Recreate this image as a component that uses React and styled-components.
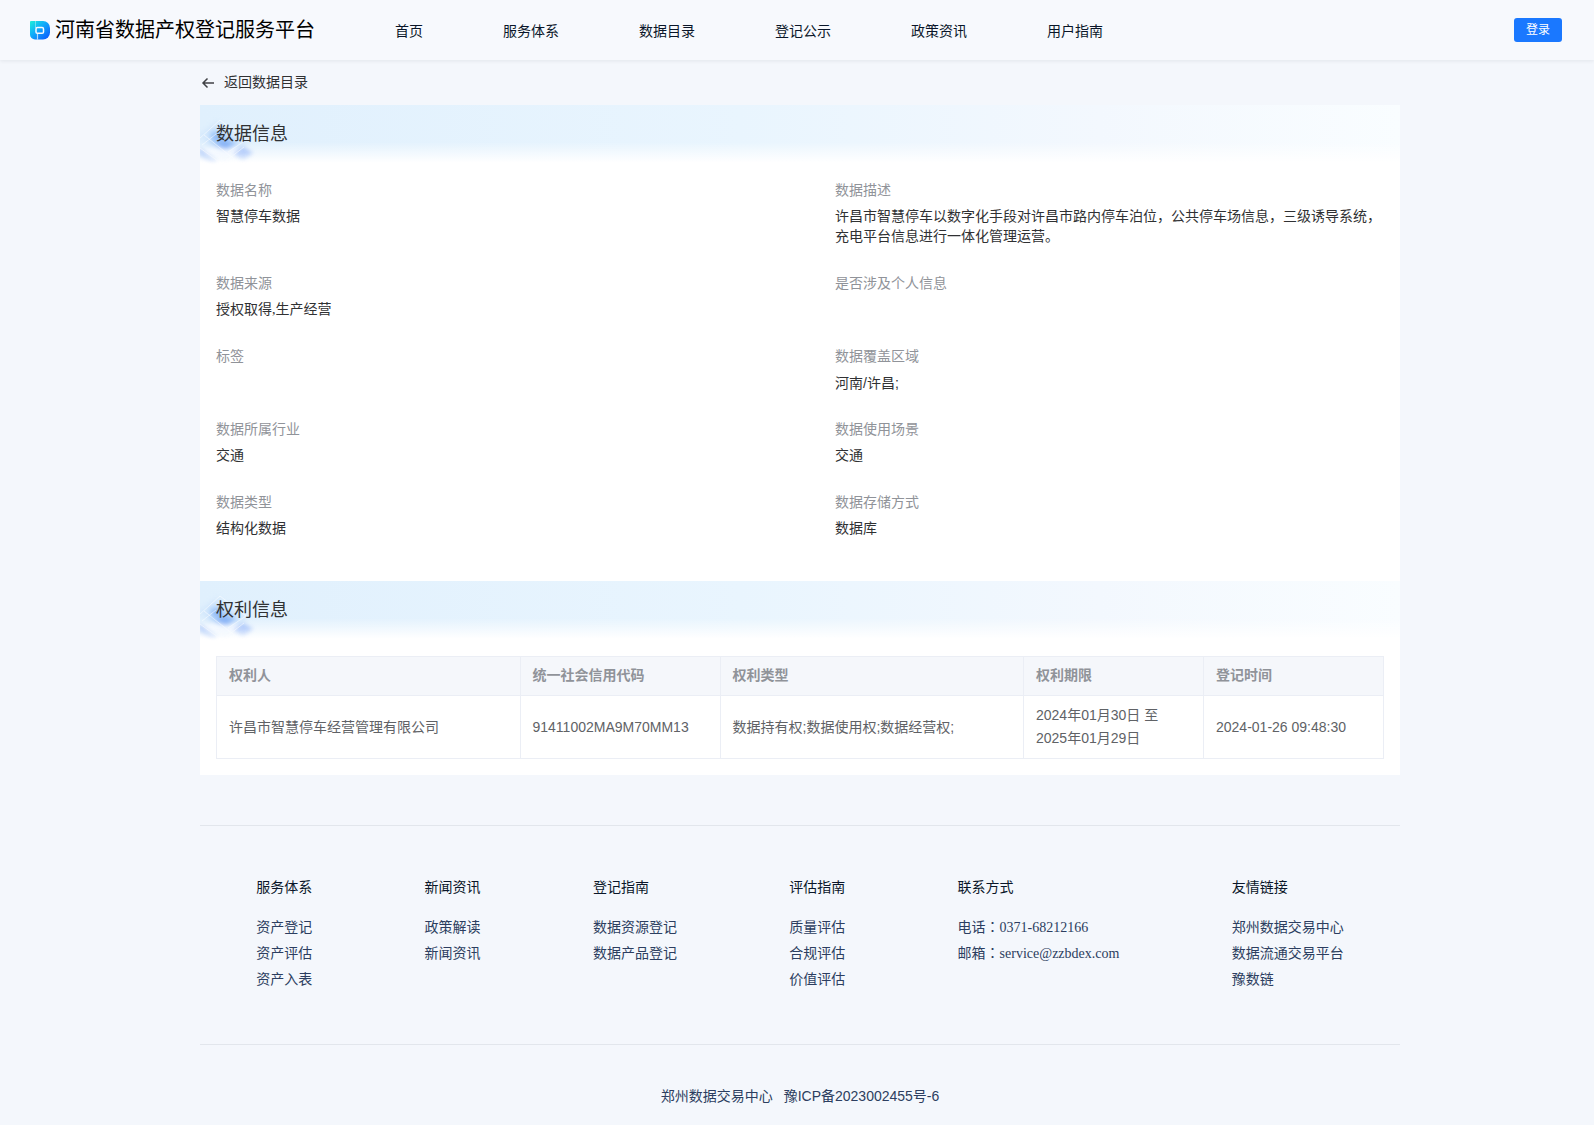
import React from 'react';
import styled, { createGlobalStyle } from 'styled-components';

const serif = '"Liberation Serif", "Noto Sans CJK SC", serif';
const contactSerif = '"Liberation Serif", "Noto Sans CJK JP", serif';
const sans = '"Liberation Sans", "Noto Sans CJK SC", sans-serif';

const GlobalStyle = createGlobalStyle`
  * {
    box-sizing: border-box;
  }
  body {
    margin: 0;
    background: #f4f7fc;
    font-family: ${serif};
    font-size: 14px;
    line-height: 20px;
    color: #303133;
  }
  a {
    color: inherit;
    text-decoration: none;
  }
`;

const Header = styled.header`
  display: flex;
  align-items: center;
  height: 60px;
  padding: 0 32px 0 30px;
  background: #f7f9fd;
  box-shadow: 0 1px 4px rgba(0, 21, 41, 0.08);
`;

const Brand = styled.a`
  display: flex;
  align-items: center;
  gap: 5px;
  margin-right: 80px;
  font-size: 20px;
  line-height: 30px;
  color: #000000;
  white-space: nowrap;
`;

const Nav = styled.nav`
  display: flex;
  flex: 1;
  gap: 80px;
  padding-top: 4px;
  color: #0a1629;
  white-space: nowrap;
`;

const LoginButton = styled.button`
  width: 48px;
  height: 24px;
  padding: 0;
  border: none;
  border-radius: 3px;
  background: #1a78ff;
  color: #ffffff;
  font-family: ${sans};
  font-size: 12px;
  line-height: 24px;
  cursor: pointer;
`;

const Page = styled.div`
  padding-left: 6px;
`;

const Container = styled.div`
  max-width: 1200px;
  margin: 0 auto;
`;

const BackLink = styled.a`
  display: flex;
  align-items: center;
  gap: 8px;
  height: 45px;
  padding-top: 1px;
`;

const Card = styled.main`
  background: #ffffff;
`;

const Banner = styled.div`
  position: relative;
  height: 60px;
  padding: 15px 16px;
  background:
    linear-gradient(180deg, rgba(255, 255, 255, 0) 62%, #ffffff 96%),
    linear-gradient(90deg, #e0f0fd 0%, #e9f5fe 45%, #f3f8fe 75%, #f9fdff 100%);
`;

const BannerArt = styled.svg`
  position: absolute;
  left: 0;
  top: 0;
`;

const Title = styled.h2`
  position: relative;
  margin: 0;
  font-size: 18px;
  font-weight: 400;
  line-height: 28px;
`;

const Details = styled.dl`
  display: grid;
  grid-template-columns: 1fr 1fr;
  column-gap: 70px;
  margin: 0;
  padding: 16px 16px 15px;
`;

const Detail = styled.div`
  min-height: 73px;
  padding-bottom: 27px;
`;

const Label = styled.dt`
  margin-bottom: 6px;
  color: #909399;
`;

const Value = styled.dd`
  margin: 0;
  font-family: ${({ $latin }) => ($latin ? sans : serif)};
`;

const TableWrap = styled.div`
  padding: 15px 16px 16px;
`;

const Table = styled.table`
  width: 100%;
  table-layout: fixed;
  border-collapse: collapse;
  font-family: ${sans};
  line-height: 23px;
  color: #606266;
  text-align: left;
`;

const Th = styled.th`
  padding: 7px 12px 9px;
  border: 1px solid #ebeef5;
  background: #f5f7fb;
  color: #909399;
  line-height: 22px;
`;

const Td = styled.td`
  padding: 8px 12px;
  border: 1px solid #ebeef5;
`;

const Footer = styled.footer`
  margin-top: 50px;
  color: #2c3e60;
`;

const FooterColumns = styled.div`
  display: flex;
  justify-content: space-around;
  padding: 52px 0 48px;
  border-top: 1px solid #e2e6ec;
  border-bottom: 1px solid #e2e6ec;
`;

const FooterTitle = styled.h3`
  margin: 0 0 20px;
  font-size: 14px;
  font-weight: 400;
  line-height: 20px;
  color: #0a1629;
`;

const FooterList = styled.ul`
  margin: 0;
  padding: 0;
  list-style: none;
`;

const FooterItem = styled.li`
  margin-bottom: 6px;
  font-family: ${({ $contact }) => ($contact ? contactSerif : serif)};
`;

const Copyright = styled.div`
  display: flex;
  justify-content: center;
  gap: 11px;
  padding: 41px 0 19px;
  font-family: ${sans};
`;

const navItems = ['首页', '服务体系', '数据目录', '登记公示', '政策资讯', '用户指南'];

const details = [
  { label: '数据名称', value: '智慧停车数据' },
  {
    label: '数据描述',
    value:
      '许昌市智慧停车以数字化手段对许昌市路内停车泊位，公共停车场信息，三级诱导系统，充电平台信息进行一体化管理运营。',
  },
  { label: '数据来源', value: '授权取得,生产经营' },
  { label: '是否涉及个人信息', value: '' },
  { label: '标签', value: '' },
  { label: '数据覆盖区域', value: '河南/许昌;', latin: true },
  { label: '数据所属行业', value: '交通' },
  { label: '数据使用场景', value: '交通' },
  { label: '数据类型', value: '结构化数据' },
  { label: '数据存储方式', value: '数据库' },
];

// the two name columns share whatever the fixed ones leave
const columns = [
  { title: '权利人' },
  { title: '统一社会信用代码', width: 200 },
  { title: '权利类型' },
  { title: '权利期限', width: 180 },
  { title: '登记时间', width: 180 },
];

const rows = [
  [
    '许昌市智慧停车经营管理有限公司',
    '91411002MA9M70MM13',
    '数据持有权;数据使用权;数据经营权;',
    '2024年01月30日 至 2025年01月29日',
    '2024-01-26 09:48:30',
  ],
];

const footerColumns = [
  { title: '服务体系', items: ['资产登记', '资产评估', '资产入表'] },
  { title: '新闻资讯', items: ['政策解读', '新闻资讯'] },
  { title: '登记指南', items: ['数据资源登记', '数据产品登记'] },
  { title: '评估指南', items: ['质量评估', '合规评估', '价值评估'] },
  { title: '联系方式', items: ['电话：0371-68212166', '邮箱：service@zzbdex.com'], contact: true },
  { title: '友情链接', items: ['郑州数据交易中心', '数据流通交易平台', '豫数链'] },
];

const Logo = () => (
  <svg width="20" height="20" viewBox="0 0 20 20" aria-hidden="true">
    <defs>
      <linearGradient id="logoFill" x1="0" y1="0" x2="1" y2="1">
        <stop offset="0" stopColor="#1ff0d8" />
        <stop offset="0.4" stopColor="#0fb0f8" />
        <stop offset="1" stopColor="#0a50ff" />
      </linearGradient>
    </defs>
    <path d="M1 1h12a7 7 0 0 1 7 7v4.500a7 7 0 0 1-7 7H5a5 5 0 0 1-5-5V2a1 1 0 0 1 1-1z" fill="url(#logoFill)" />
    <g fill="none" stroke="#f7f9fd">
      <path d="M5.500 1v7" strokeWidth="0.800" opacity="0.500" />
      <rect x="6" y="7.500" width="7.500" height="5.800" rx="1.400" strokeWidth="1.500" />
      <path d="M7.500 13v6.500" strokeWidth="1.200" opacity="0.700" />
    </g>
  </svg>
);

const BackArrow = () => (
  <svg width="16" height="16" viewBox="0 0 16 16" fill="none" stroke="#404246" strokeWidth="1.500" aria-hidden="true">
    <path d="M14 8H3M7.500 3.500L3 8l4.500 4.500" />
  </svg>
);

const SectionBanner = ({ id, title }) => (
  <Banner>
    <BannerArt width="64" height="60" viewBox="0 0 64 60" aria-hidden="true">
      <defs>
        <filter id={`${id}-soft`}>
          <feGaussianBlur stdDeviation="2" />
        </filter>
        <linearGradient id={`${id}-fade`} x1="0" y1="0" x2="0" y2="1">
          <stop offset="0.75" stopColor="#ffffff" />
          <stop offset="1" stopColor="#ffffff" stopOpacity="0" />
        </linearGradient>
        <mask id={`${id}-mask`}>
          <rect width="64" height="60" fill={`url(#${id}-fade)`} />
        </mask>
      </defs>
      <g mask={`url(#${id}-mask)`}>
        <g filter={`url(#${id}-soft)`}>
          <path d="M-2 30L18 16l30 22-24 20z" fill="#cfe4fc" opacity="0.6" />
          <path d="M3 46L24 38l18 8-20 12z" fill="#f7fbff" opacity="0.9" />
          <path d="M9 27l8-3 14 8 7 7-9 6-12-2-7-6z" fill="#a3caf9" opacity="0.7" />
          <path d="M12 32l5-4 5 4-5 4zM15 39l9-5 10 5-9 5z" fill="#6c9ff3" opacity="0.6" />
          <path d="M33 49l10-7 10 6-10 8z" fill="#a9c4fa" opacity="0.9" />
          <path d="M-1 43l19 13-5 4L-1 51z" fill="#b0cbf9" />
        </g>
        <g fill="none" stroke="#ffffff" strokeWidth="1" opacity="0.5">
          <path d="M0 33L20 15l26 20M2 40l14-11M28 47l18-12M0 43l22 16 22-17M4 30l30 24" />
        </g>
      </g>
    </BannerArt>
    <Title>{title}</Title>
  </Banner>
);

const App = () => (
  <>
    <GlobalStyle />
    <Header>
      <Brand href="#">
        <Logo />
        河南省数据产权登记服务平台
      </Brand>
      <Nav>
        {navItems.map((item) => (
          <a key={item} href="#">{item}</a>
        ))}
      </Nav>
      <LoginButton type="button">登录</LoginButton>
    </Header>
    <Page>
      <Container>
        <BackLink href="#">
          <BackArrow />
          返回数据目录
        </BackLink>
        <Card>
          <SectionBanner id="data" title="数据信息" />
          <Details>
            {details.map(({ label, value, latin }) => (
              <Detail key={label}>
                <Label>{label}</Label>
                <Value $latin={latin}>{value}</Value>
              </Detail>
            ))}
          </Details>
          <SectionBanner id="rights" title="权利信息" />
          <TableWrap>
            <Table>
              <colgroup>
                {columns.map(({ title, width }) => (
                  <col key={title} width={width} />
                ))}
              </colgroup>
              <thead>
                <tr>
                  {columns.map(({ title }) => (
                    <Th key={title} scope="col">{title}</Th>
                  ))}
                </tr>
              </thead>
              <tbody>
                {rows.map((row) => (
                  <tr key={row[1]}>
                    {row.map((cell) => (
                      <Td key={cell}>{cell}</Td>
                    ))}
                  </tr>
                ))}
              </tbody>
            </Table>
          </TableWrap>
        </Card>
        <Footer>
          <FooterColumns>
            {footerColumns.map(({ title, items, contact }) => (
              <div key={title}>
                <FooterTitle>{title}</FooterTitle>
                <FooterList>
                  {items.map((item) => (
                    <FooterItem key={item} $contact={contact}>
                      {contact ? item : <a href="#">{item}</a>}
                    </FooterItem>
                  ))}
                </FooterList>
              </div>
            ))}
          </FooterColumns>
          <Copyright>
            <span>郑州数据交易中心</span>
            <a href="#">豫ICP备2023002455号-6</a>
          </Copyright>
        </Footer>
      </Container>
    </Page>
  </>
);

export default App;
